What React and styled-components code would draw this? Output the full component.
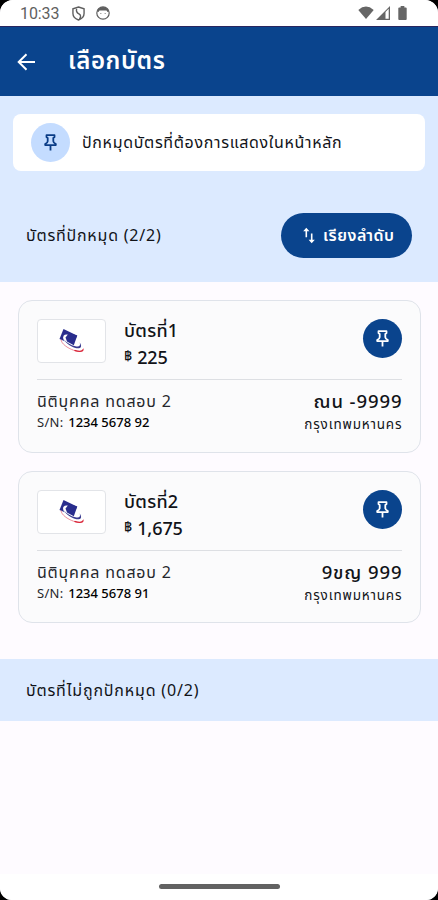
import React from "react";
import styled, { createGlobalStyle } from "styled-components";

const Global = createGlobalStyle`
  * { box-sizing: border-box; }
  body { margin: 0; background: #000; font-family: "Noto Sans Thai", "Prompt", "Noto Sans", "Open Sans", sans-serif; color: #111; }
`;

const Screen = styled.main`
  width: 438px;
  height: 900px;
  display: flex;
  flex-direction: column;
  overflow: hidden;
  border-radius: 13px 13px 12px 12px;
  background: #fefbff;
`;

const StatusBar = styled.div`
  height: 27px;
  flex: none;
  display: flex;
  align-items: center;
  padding: 0 31px 0 20px;
  background: #fff;
  border-bottom: 1px solid #28265f;
  color: #5f5f5f;
`;

const Clock = styled.span`
  width: 52px;
  font: 400 16px/26px Roboto, sans-serif;
  letter-spacing: -0.1px;
  padding-top: 2px;
`;

const StatusIcon = styled.svg`
  flex: none;
  margin-left: ${(p) => p.$gap || 0}px;
`;

const Spacer = styled.span`
  flex: 1;
`;

const Header = styled.header`
  height: 69px;
  flex: none;
  display: flex;
  align-items: center;
  padding-left: 17px;
  background: #0a448d;
  color: #fff;
`;

const Label = styled.span`
  display: block;
  white-space: nowrap;
  font-size: ${(p) => p.$size}px;
  font-weight: ${(p) => p.$weight || 400};
  line-height: ${(p) => p.$line || 24}px;
  letter-spacing: ${(p) => p.$track || 0}px;
  margin-right: ${(p) => -(p.$track || 0)}px;
  color: ${(p) => p.$color || "#111318"};
`;

const Title = styled(Label).attrs({ as: "h1" })`
  margin: 0 0 0 32px;
`;

const Panel = styled.section`
  height: 186px;
  flex: none;
  padding: 18px 13px 0;
  background: #dceaff;
`;

const Banner = styled.div`
  height: 57px;
  display: flex;
  align-items: center;
  gap: 12px;
  padding-left: 18px;
  border-radius: 8px;
  background: #fff;
`;

const PinCircle = styled.span`
  width: 39px;
  height: 39px;
  flex: none;
  display: grid;
  place-items: center;
  border-radius: 50%;
  background: ${(p) => (p.$solid ? "#0a448d" : "#c4dcff")};
  color: ${(p) => (p.$solid ? "#fff" : "#0a3c86")};
`;

const SectionRow = styled.div`
  display: flex;
  align-items: center;
  justify-content: space-between;
  margin-top: 42px;
  padding: 0 13px;
`;

const SortButton = styled.button`
  width: 131px;
  height: 45px;
  display: flex;
  align-items: center;
  gap: 8px;
  padding: 0 0 0 22px;
  border: 0;
  border-radius: 23px;
  background: #0a448d;
  font-family: inherit;
`;

const CardList = styled.section`
  height: 377px;
  flex: none;
  display: flex;
  flex-direction: column;
  gap: 18px;
  padding: 18px 17.5px 0 18px;
`;

const Card = styled.article`
  height: 152.5px;
  padding: 18px 18px 0;
  border: 1px solid #dfe3ea;
  border-radius: 14px;
  background: #fbfbfc;
`;

const CardTop = styled.div`
  height: 61px;
  display: flex;
  align-items: flex-start;
  border-bottom: 1px solid #dddfe3;
`;

const LogoBox = styled.div`
  width: 69px;
  height: 44px;
  display: grid;
  place-items: center;
  border: 1px solid #e2e4e8;
  border-radius: 4px;
  background: #fff;
`;

const CardName = styled.div`
  flex: 1;
  margin-left: 18px;
`;

const Amount = styled.div`
  display: flex;
  align-items: flex-start;
  gap: 5px;
  margin-top: 1px;
`;

const CardBottom = styled.div`
  display: flex;
  justify-content: space-between;
  padding-top: 10px;
`;

const Plate = styled.div`
  display: flex;
  flex-direction: column;
  align-items: flex-end;
`;

const Serial = styled.div`
  display: flex;
  gap: 5px;
  margin-top: -1px;
`;

const BottomSection = styled.section`
  height: 62px;
  flex: none;
  display: flex;
  align-items: center;
  padding: 1px 0 0 26px;
  background: #dceaff;
`;

const NavBar = styled.nav`
  height: 26px;
  margin-top: auto;
  padding-top: 10px;
  background: #fff;
`;

const Handle = styled.div`
  width: 121px;
  height: 5px;
  margin: 0 auto;
  border-radius: 3px;
  background: #626262;
`;

const PinIcon = () => (
  <svg width="13" height="17" viewBox="0 0 13 17" fill="none" stroke="currentColor" strokeWidth="1.8" strokeLinejoin="round">
    <path d="M2.500 1.200h8v1.800L9.300 4v3.300c0 1 .5 1.600 2.500 2.800v1H1.200v-1C3.200 8.900 3.700 8.300 3.700 7.300V4L2.500 3z" />
    <path d="M6.500 11v5.500" />
  </svg>
);

const BackIcon = () => (
  <svg width="19" height="18" viewBox="0 0 19 18" fill="none" stroke="#fff" strokeWidth="2">
    <path d="M18 9H2M9.500 1.200 1.700 9l7.800 7.800" />
  </svg>
);

const SortIcon = () => (
  <svg width="12" height="17" viewBox="0 0 12 17" fill="none" stroke="#fff" strokeWidth="1.600">
    <path d="M3.300 10.200V2.500M8.700 6.500v8" />
    <path d="M.2 4.300 3.300.8l3.100 3.500zM5.600 12.700l3.100 3.500 3.100-3.500z" fill="#fff" stroke="none" />
  </svg>
);

const BrandLogo = () => (
  <svg width="28" height="26" viewBox="0 0 28 26">
    <path d="M5.500 1 19 7.500 15.500 17 1.500 11z" fill="#292d8d" />
    <ellipse cx="14.500" cy="14.200" rx="11" ry="5.200" transform="rotate(36 14.500 14.200)" fill="#fff" />
    <path d="M7.500 9.500 11 5 19.300 7.500 15.800 17.200 9 13.500z" fill="#292d8d" />
    <path d="M6 11.500C8 15.500 13.500 19 18.500 20.200c4.500.6 6-1.600 3.200-5.800 1.200 3.300-.6 4.600-4.200 3.800C12.500 17.200 8.500 14.500 6 11.500z" fill="#3b3c91" />
    <path d="M3 11.500C3.500 16 9.500 20 15.500 22.200c5.500 2 9.600 2 10-1.700" fill="none" stroke="#ea7f8c" strokeWidth=".9" />
    <path d="M16.500 22.300c4.500 1.500 8 1.500 8.800-.8" fill="none" stroke="#d92538" strokeWidth="1.300" />
  </svg>
);

const cards = [
  { name: "บัตรที่1", amount: "225", serial: "1234 5678 92", plate: "ณน -9999" },
  { name: "บัตรที่2", amount: "1,675", serial: "1234 5678 91", plate: "9ขญ 999" },
];

function CardItem({ card }) {
  return (
    <Card>
      <CardTop>
        <LogoBox><BrandLogo /></LogoBox>
        <CardName>
          <Label $size={18} $weight={500} $line={26} $track={0.3}>{card.name}</Label>
          <Amount>
            <Label $size={14} $weight={500} $line={21}>฿</Label>
            <Label $size={18} $weight={500} $line={25} $track={-0.1}>{card.amount}</Label>
          </Amount>
        </CardName>
        <PinCircle $solid><PinIcon /></PinCircle>
      </CardTop>
      <CardBottom>
        <div>
          <Label $size={16} $line={25} $track={0.8} $color="#25272c">นิติบุคคล ทดสอบ 2</Label>
          <Serial>
            <Label $size={13} $line={18} $track={0.3} $color="#25272c">S/N:</Label>
            <Label $size={13} $line={18} $weight={500} $color="#000">{card.serial}</Label>
          </Serial>
        </div>
        <Plate>
          <Label $size={18.5} $weight={500} $line={25} $track={0.9}>{card.plate}</Label>
          <Label $size={13.5} $line={21} $track={0.8}>กรุงเทพมหานคร</Label>
        </Plate>
      </CardBottom>
    </Card>
  );
}

export default function App() {
  return (
    <>
      <Global />
      <Screen>
        <StatusBar>
          <Clock>10:33</Clock>
          <StatusIcon width="13" height="15" viewBox="0 0 14 16" fill="none" stroke="#5f5f5f" strokeWidth="1.500">
            <path d="M7 1 13 3v5c0 3-2 5.500-6 7-4-1.500-6-4-6-7V3zM5 3C4 6 5 7 7.500 8.500S9.500 12 8 14" />
          </StatusIcon>
          <StatusIcon $gap={11} width="14" height="14" viewBox="0 0 14 14">
            <circle cx="7" cy="7" r="6.200" fill="none" stroke="#5f5f5f" strokeWidth="1.200" />
            <path d="M1 5.500Q2.500 1 7 1t6 4.500l-1.500.5-1-1.500h-7L2.500 6z" fill="#5f5f5f" />
            <path d="M4 7.500h1.500M8.500 7.500H10" stroke="#aaa" />
          </StatusIcon>
          <Spacer />
          <StatusIcon width="16" height="14" viewBox="0 0 17 14">
            <path d="M.3 3.800Q8.500-3.500 16.700 3.800L8.500 13.500z" fill="#666" />
          </StatusIcon>
          <StatusIcon $gap={2} width="14" height="14" viewBox="0 0 14 14">
            <path d="M0 14 14 0v14zM9.500 6V12.700H12.700V2.800z" fill="#666" fillRule="evenodd" />
          </StatusIcon>
          <StatusIcon $gap={8} width="9" height="14" viewBox="0 0 9 15">
            <path d="M2.500 0h4v1.500H8q1 0 1 1V14q0 1-1 1H1q-1 0-1-1V2.500q0-1 1-1h1.500z" fill="#666" />
          </StatusIcon>
        </StatusBar>
        <Header>
          <BackIcon />
          <Title $size={24} $weight={600} $line={36} $track={0.6} $color="#fff">เลือกบัตร</Title>
        </Header>
        <Panel>
          <Banner>
            <PinCircle><PinIcon /></PinCircle>
            <Label $size={16} $track={0.67}>ปักหมุดบัตรที่ต้องการแสดงในหน้าหลัก</Label>
          </Banner>
          <SectionRow>
            <Label $size={16} $track={0.78}>บัตรที่ปักหมุด (2/2)</Label>
            <SortButton>
              <SortIcon />
              <Label $size={16} $weight={600} $track={0.5} $color="#fff">เรียงลำดับ</Label>
            </SortButton>
          </SectionRow>
        </Panel>
        <CardList>
          {cards.map((card) => <CardItem key={card.serial} card={card} />)}
        </CardList>
        <BottomSection>
          <Label $size={16} $track={0.82}>บัตรที่ไม่ถูกปักหมุด (0/2)</Label>
        </BottomSection>
        <NavBar><Handle /></NavBar>
      </Screen>
    </>
  );
}
